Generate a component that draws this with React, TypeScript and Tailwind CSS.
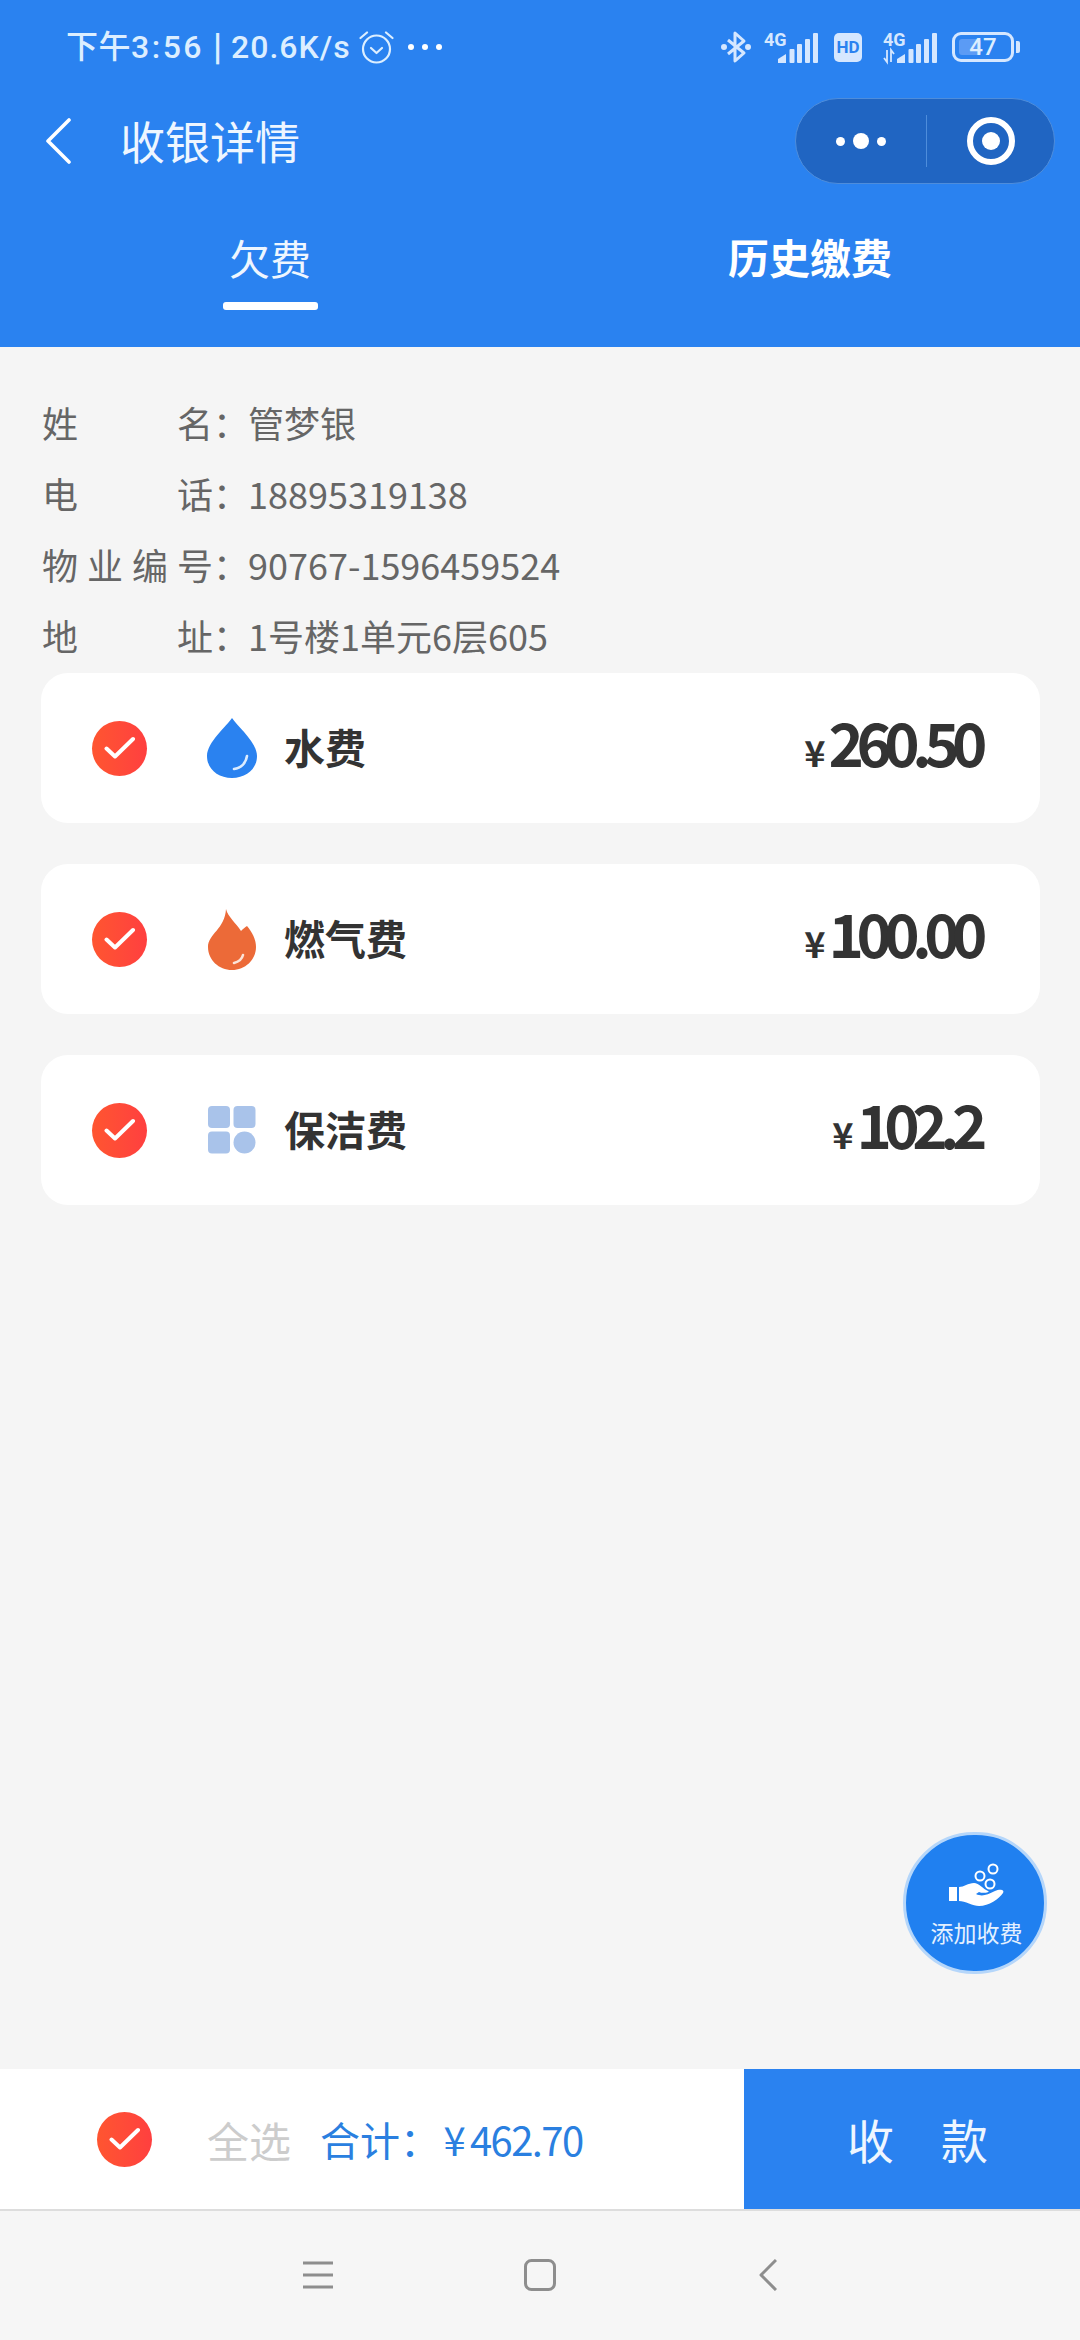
const fees = [
  { name: "水费", amount: "260.50", icon: <DropIcon /> },
  { name: "燃气费", amount: "100.00", icon: <FireIcon /> },
  { name: "保洁费", amount: "102.2", icon: <GridIcon /> },
];

const info = [
  { label: ["姓", "名"], value: "管梦银" },
  { label: ["电", "话"], value: "18895319138" },
  { label: ["物", "业", "编", "号"], value: "90767-1596459524" },
  { label: ["地", "址"], value: "1号楼1单元6层605" },
];

function DropIcon() {
  return (
    <svg width="50" height="60" viewBox="0 0 50 60">
      <path d="M25 0C30 8 50 24 50 38C50 51 39 60 25 60C11 60 0 51 0 38C0 24 20 8 25 0Z" fill="#2a82f0" />
      <path d="M27 51C34 50 39 45 40 38" fill="none" stroke="#dcecff" strokeWidth="2.6" strokeLinecap="round" />
    </svg>
  );
}

function FireIcon() {
  return (
    <svg width="48" height="61" viewBox="0 0 48 61">
      <path d="M18 0C20 8 28 14 33 22C35 20 37 18 39 17C44 23 48 30 48 38C48 51 37 61 24 61C11 61 0 51 0 38C0 25 17 20 18 0Z" fill="#ec6a38" />
      <path d="M26 54C30 53 34 50 35 46" fill="none" stroke="#fbe3d8" strokeWidth="2.6" strokeLinecap="round" />
    </svg>
  );
}

function GridIcon() {
  return (
    <svg width="48" height="48" viewBox="0 0 48 48" fill="#a9c3ea">
      <rect x="0" y="0" width="22" height="22" rx="4" />
      <rect x="25.5" y="0" width="22" height="22" rx="4" />
      <rect x="0" y="25.5" width="22" height="22" rx="4" />
      <circle cx="36.5" cy="36.5" r="11" />
    </svg>
  );
}

function Check() {
  return (
    <div className="w-[55px] h-[55px] rounded-full bg-linear-to-r from-[#ff5530] to-[#ff3f3f] flex items-center justify-center shrink-0">
      <svg width="32" height="24" viewBox="0 0 32 24" fill="none">
        <path d="M2.5 12.5L11 20.5L29 3" stroke="#fff" strokeWidth="4" strokeLinecap="round" strokeLinejoin="round" />
      </svg>
    </div>
  );
}

function Signal({ arrows }: { arrows?: boolean }) {
  return (
    <svg width="54" height="40" viewBox="0 -4 54 40" fill="#d5e7ff">
      <text x="0" y="15" fontSize="18" fontWeight="700" fontFamily="Roboto, sans-serif">4G</text>
      <path d="M14 32V28L22 23V32Z" />
      <rect x="25.5" y="18" width="5" height="14" rx="1" />
      <rect x="33" y="13" width="5" height="19" rx="1" />
      <rect x="41" y="8" width="5" height="24" rx="1" />
      <rect x="49" y="2" width="5" height="30" rx="1" />
      {arrows && <path d="M4 19V31L1 27M8 31V19L11 23" fill="none" stroke="#d5e7ff" strokeWidth="1.8" />}
    </svg>
  );
}

function StatusBar() {
  return (
    <div className="h-[94px] flex items-center justify-between pl-[66px] pr-[60px] text-[#dceeff]">
      <div className="flex items-center">
        <span className="flex items-center text-[32px] font-medium leading-none whitespace-nowrap font-['Roboto','Noto_Sans_CJK_SC',sans-serif]">
          <span className="tracking-[0.5px]">下午</span>
          <span className="tracking-[2.5px]">3:56</span>
          <span className="mx-[9px] text-[36px] font-bold">|</span>
          <span className="tracking-[1px]">20.6K/s</span>
        </span>
        <svg className="ml-[8px]" width="35" height="34" viewBox="0 0 35 34" fill="none" stroke="#dceeff" strokeWidth="2.2" strokeLinecap="round" strokeLinejoin="round">
          <circle cx="17.5" cy="19" r="13.5" />
          <path d="M12 18L17.5 23L23 18" />
          <path d="M1.5 8L8 2.5M33.5 8L27 2.5" />
        </svg>
        <div className="ml-[14px] flex gap-[8px]">
          <div className="w-[6px] h-[6px] rounded-full bg-white" />
          <div className="w-[6px] h-[6px] rounded-full bg-white" />
          <div className="w-[6px] h-[6px] rounded-full bg-white" />
        </div>
      </div>
      <div className="flex items-center">
        <svg width="30" height="34" viewBox="0 0 30 34" fill="none" stroke="#d5e7ff" strokeWidth="3" strokeLinejoin="round">
          <path d="M7 10L23 23L14 31V3L23 11L7 24" />
          <circle cx="3" cy="17" r="1.5" fill="#d5e7ff" />
          <circle cx="27" cy="17" r="1.5" fill="#d5e7ff" />
        </svg>
        <div className="ml-[13px]">
          <Signal />
        </div>
        <div className="ml-[16px] w-[28px] h-[29px] rounded-[5px] bg-[#d5e7ff] flex items-center justify-center text-[#2a82f0] text-[17px] font-bold leading-none font-['Roboto',sans-serif]">
          HD
        </div>
        <div className="ml-[21px]">
          <Signal arrows />
        </div>
        <div className="ml-[15px] w-[62px] h-[30px] rounded-[9px] border-[3.5px] border-[#d5e7ff] relative flex items-center justify-center p-[3px]">
          <div className="absolute left-[4px] top-[4px] bottom-[4px] w-[22px] rounded-[3px] bg-[#5b9bf5]" />
          <span className="relative text-[24px] leading-none font-medium font-['Roboto',sans-serif]">47</span>
        </div>
        <div className="ml-[2px] w-[4px] h-[12px] rounded-r-[2px] bg-[#d5e7ff]" />
      </div>
    </div>
  );
}

function NavBar() {
  return (
    <div className="h-[94px] flex items-center justify-between pl-[45px] pr-[25px]">
      <div className="flex items-center">
        <svg width="26" height="46" viewBox="0 0 26 46" fill="none">
          <path d="M24 2L3 23L24 44" stroke="#fff" strokeWidth="3.6" strokeLinecap="round" strokeLinejoin="round" />
        </svg>
        <h1 className="ml-[49px] text-[45px] leading-none text-[#eef6ff] font-normal -translate-y-px">收银详情</h1>
      </div>
      <div className="w-[260px] h-[86px] rounded-full bg-[#2065c2] border border-[#4e8ddb] flex items-center">
        <div className="w-[130px] flex items-center justify-center gap-[8px]">
          <div className="w-[9px] h-[9px] rounded-full bg-white" />
          <div className="w-[16px] h-[16px] rounded-full bg-white" />
          <div className="w-[9px] h-[9px] rounded-full bg-white" />
        </div>
        <div className="w-px h-[52px] bg-[#4e8ddb]" />
        <div className="flex-1 flex items-center justify-center">
          <div className="w-[48px] h-[48px] rounded-full border-[6px] border-white flex items-center justify-center">
            <div className="w-[18px] h-[18px] rounded-full bg-white" />
          </div>
        </div>
      </div>
    </div>
  );
}

function Tabs() {
  return (
    <div className="grid grid-cols-2 h-[159px] text-white">
      <div className="flex flex-col items-center pt-[46px]">
        <span className="text-[41px] leading-[46px] text-[#eef6ff]">欠费</span>
        <div className="mt-[22px] w-[95px] h-[8px] rounded-[3px] bg-white" />
      </div>
      <div className="flex flex-col items-center pt-[45px]">
        <span className="text-[41px] leading-[46px] font-bold">历史缴费</span>
      </div>
    </div>
  );
}

export default function App() {
  return (
    <div className="w-[1080px] h-[2340px] relative flex flex-col bg-[#f5f5f5] overflow-hidden font-['Noto_Sans_CJK_SC','Noto_Sans',sans-serif]">
      <header className="h-[347px] bg-[#2a82f0]">
        <StatusBar />
        <NavBar />
        <Tabs />
      </header>

      <section className="pt-[40px] pb-[2px] pl-[42px] text-[36px] leading-[71px] text-[#666]">
        {info.map((row) => (
          <div key={row.value} className="h-[71px] flex">
            <div className="w-[171px] flex justify-between">
              {row.label.map((c) => (
                <span key={c}>{c}</span>
              ))}
            </div>
            <span>：</span>
            <span className="-ml-px">{row.value}</span>
          </div>
        ))}
      </section>

      <section className="ml-[41px] mr-[40px] flex flex-col gap-[41px]">
        {fees.map((fee) => (
          <div key={fee.name} className="h-[150px] rounded-[27px] bg-white flex items-center pl-[51px] pr-[60px]">
            <Check />
            <div className="ml-[60px] w-[50px] flex justify-center">{fee.icon}</div>
            <span className="ml-[27px] text-[41px] leading-[50px] -mt-[4px] font-bold text-[#333]">{fee.name}</span>
            <div className="ml-auto -mt-[8px] flex items-baseline text-[#333]">
              <span className="text-[36px] font-bold">¥</span>
              <span className="ml-[3px] text-[60px] font-bold tracking-[-0.125em] leading-none">{fee.amount}</span>
            </div>
          </div>
        ))}
      </section>

      {/* floating add button */}
      <div className="absolute left-[903px] top-[1832px] w-[144px] h-[142px] rounded-full bg-[#2080f0] border-[3px] border-[#b5d6fa] flex flex-col items-center pt-[28px] pl-[3px]">
        <svg width="56" height="44" viewBox="0 0 56 44">
          <g fill="none" stroke="#fff" strokeWidth="2">
            <circle cx="31" cy="13" r="4.5" />
            <circle cx="44" cy="6" r="4.5" />
            <circle cx="41" cy="21" r="4.5" />
          </g>
          <path d="M0 24H8V38H0Z" fill="#fff" />
          <path d="M10 24C15 24 19 20 25 20C30 20 34 26 39 28C42 29 34 31 30 29L27 31C33 34 38 32 46 28C50 26 56 26 54 30C50 36 40 43 30 43C24 43 16 38 10 38Z" fill="#fff" />
        </svg>
        <span className="mt-[11px] text-[23px] leading-[28px] text-[#e4f0ff]">添加收费</span>
      </div>

      <div className="mt-auto h-[142px] flex bg-white border-b-2 border-[#ddd]">
        <div className="flex-1 flex items-center pl-[97px]">
          <Check />
          <span className="ml-[55px] text-[42px] text-[#ccc]">全选</span>
          <span className="ml-[29px] text-[40px] text-[#2a7fe0]">合计：</span>
          <span className="w-[31px] -ml-[1px] text-center text-[40px] text-[#2a7fe0]">¥</span>
          <span className="text-[40px] text-[#2a7fe0] tracking-[-0.04em]">462.70</span>
        </div>
        <div className="w-[336px] bg-[#2a82f0] flex items-center justify-center text-[47px] text-[#eef6ff] tracking-[47px] pl-[58px]">
          收款
        </div>
      </div>

      <nav className="h-[129px] pb-[2px] bg-[#f6f6f6] flex items-center justify-center text-[#8e8e8e]">
        <svg width="30" height="28" viewBox="0 0 30 28" stroke="currentColor" strokeWidth="3">
          <path d="M0 2H30M0 14H30M0 26H30" />
        </svg>
        <svg className="ml-[191px]" width="32" height="32" viewBox="0 0 32 32" fill="none" stroke="currentColor" strokeWidth="3">
          <rect x="1.5" y="1.5" width="29" height="29" rx="6" />
        </svg>
        <svg className="ml-[203px]" width="18" height="32" viewBox="0 0 18 32" fill="none" stroke="currentColor" strokeWidth="3" strokeLinejoin="round">
          <path d="M17 1L2 16L17 31" />
        </svg>
      </nav>
    </div>
  );
}
